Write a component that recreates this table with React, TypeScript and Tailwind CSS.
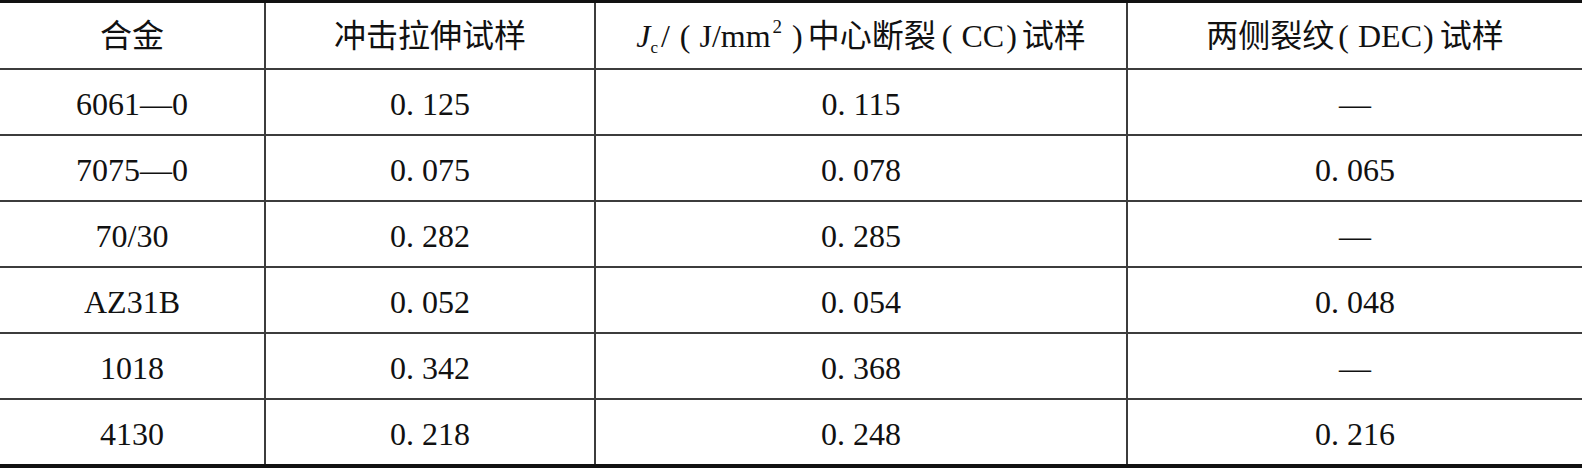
import React from "react";

const rows: [string, string, string, string][] = [
  ["6061—0", "0. 125", "0. 115", "—"],
  ["7075—0", "0. 075", "0. 078", "0. 065"],
  ["70/30", "0. 282", "0. 285", "—"],
  ["AZ31B", "0. 052", "0. 054", "0. 048"],
  ["1018", "0. 342", "0. 368", "—"],
  ["4130", "0. 218", "0. 248", "0. 216"],
];

const font = {
  fontFamily: '"Liberation Serif", "Noto Sans CJK SC", serif',
};

export default function App() {
  return (
    <div className="w-[1582px] h-[468px] bg-white text-[#111] overflow-hidden" style={font}>
      <div className="border-t-[3px] border-b-[4px] border-[#111]">
        <div className="grid grid-cols-[264px_330px_532px_456px] h-[67px] border-b-2 border-[#3c3c3c] text-[32px]">
          <div className="flex items-center justify-center">合金</div>
          <div className="flex items-center justify-center border-l-2 border-[#3c3c3c]">冲击拉伸试样</div>
          <div className="flex items-center justify-center border-l-2 border-[#3c3c3c]">
            <span className="whitespace-nowrap flex items-baseline">
              <span className="italic">J</span>
              <span className="text-[17px] relative top-[6px]">c</span>
              <span className="ml-[3px]">/</span>
              <span className="ml-[10px]">(</span>
              <span className="ml-[9px]">J/mm</span>
              <span className="text-[19px] relative -top-[14px] ml-[2px]">2</span>
              <span className="ml-[10px]">)</span>
              <span className="ml-[5px]">中心断裂</span>
              <span className="ml-[6px]">(</span>
              <span className="ml-[9px]">CC</span>
              <span className="ml-[2px]">)</span>
              <span className="ml-[5px]">试样</span>
            </span>
          </div>
          <div className="flex items-center justify-center border-l-2 border-[#3c3c3c]">
            <span className="whitespace-nowrap flex items-baseline">
              <span>两侧裂纹</span>
              <span className="ml-[4px]">(</span>
              <span className="ml-[9px]">DEC</span>
              <span className="ml-[1px]">)</span>
              <span className="ml-[6px]">试样</span>
            </span>
          </div>
        </div>
        {rows.map((r, i) => (
          <div
            key={i}
            className={
              "grid grid-cols-[264px_330px_532px_456px] text-[32px] " +
              (i < rows.length - 1 ? "h-[66px] border-b-2 border-[#3c3c3c]" : "h-[64px]")
            }
          >
            {r.map((c, j) => (
              <div
                key={j}
                className={
                  "flex items-center justify-center pt-[4px] " +
                  (j > 0 ? "border-l-2 border-[#3c3c3c]" : "")
                }
              >
                {c}
              </div>
            ))}
          </div>
        ))}
      </div>
    </div>
  );
}
